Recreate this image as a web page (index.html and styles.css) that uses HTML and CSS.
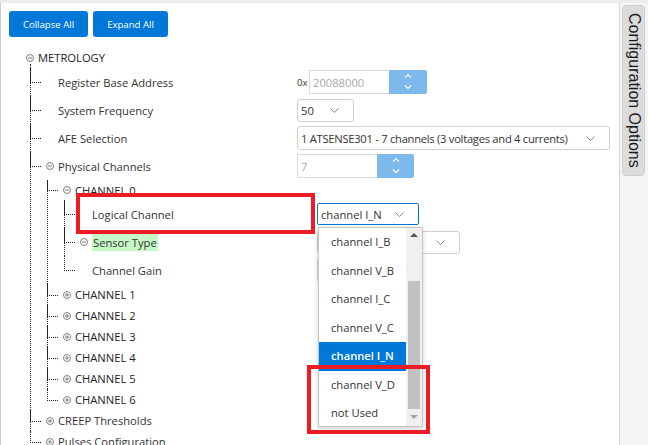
FILE: index.html
```html
<!DOCTYPE html>
<html lang="en">
<head>
<meta charset="utf-8">
<title>Configuration</title>
<link rel="stylesheet" href="styles.css">
</head>
<body>
<div class="app">
  <div class="main">
    <div class="toolbar">
      <button class="btn btn-collapse">Collapse All</button>
      <button class="btn btn-expand">Expand All</button>
    </div>
    <ul class="tree root">
      <li>
        <div class="row h21"><span class="tg"><svg class="ico" viewBox="0 0 8 8"><circle cx="4" cy="4" r="3.5"/><path d="M2 4h4"/></svg></span><span class="lbl caps">METROLOGY</span></div>
        <ul class="tree l1">
          <li><div class="row h28"><span class="tg"></span><span class="lbl w1">Register Base Address</span><span class="ctl"><span class="hex">0x</span><span class="num">20088000</span><span class="spinbtn b-addr"><svg class="spin" viewBox="0 0 8 16"><path d="M1 3.7L4 .7l3 3M1 11.5l3 3 3-3"/></svg></span></span></div></li>
          <li><div class="row h28"><span class="tg"></span><span class="lbl w1">System Frequency</span><span class="sel s-freq">50<svg class="chev" viewBox="0 0 9 5"><path d="M.5.5l4 4 4-4"/></svg></span></div></li>
          <li><div class="row h28"><span class="tg"></span><span class="lbl w1">AFE Selection</span><span class="sel s-afe"><span class="afe-text">1 ATSENSE301 - 7 channels (3 voltages and 4 currents)</span><svg class="chev" viewBox="0 0 9 5"><path d="M.5.5l4 4 4-4"/></svg></span></div></li>
          <li>
            <div class="row h28"><span class="tg"><svg class="ico" viewBox="0 0 8 8"><circle cx="4" cy="4" r="3.5"/><path d="M2 4h4"/></svg></span><span class="lbl w1">Physical Channels</span><span class="ctl"><span class="num">7</span><span class="spinbtn b-phys"><svg class="spin" viewBox="0 0 8 16"><path d="M1 3.7L4 .7l3 3M1 11.5l3 3 3-3"/></svg></span></span></div>
            <ul class="tree l2">
              <li>
                <div class="row h20"><span class="tg"><svg class="ico" viewBox="0 0 8 8"><circle cx="4" cy="4" r="3.5"/><path d="M2 4h4"/></svg></span><span class="lbl caps">CHANNEL 0</span></div>
                <ul class="tree l3">
                  <li>
                    <div class="row h28"><span class="tg"></span><span class="lbl w3">Logical Channel</span>
                      <span class="ctl">
                        <span class="sel s-log">channel I_N<svg class="chev" viewBox="0 0 9 5"><path d="M.5.5l4 4 4-4"/></svg></span>
                        <div class="dropdown">
                          <ul class="opts">
                            <li>channel I_B</li>
                            <li>channel V_B</li>
                            <li>channel I_C</li>
                            <li>channel V_C</li>
                            <li class="on">channel I_N</li>
                            <li>channel V_D</li>
                            <li>not Used</li>
                          </ul>
                          <div class="sbar"><span class="arr up"></span><span class="thumb"></span><span class="arr down"></span></div>
                          <span class="mark mark2"></span>
                        </div>
                      </span>
                      <span class="mark mark1"></span>
                    </div>
                  </li>
                  <li><div class="row h28"><span class="tg"><svg class="ico" viewBox="0 0 8 8"><circle cx="4" cy="4" r="3.5"/><path d="M2 4h4"/></svg></span><span class="lbl w3"><span class="hl">Sensor Type</span></span><span class="sel s-sensor"><span></span><svg class="chev" viewBox="0 0 9 5"><path d="M.5.5l4 4 4-4"/></svg></span></div></li>
                  <li><div class="row h28"><span class="tg"></span><span class="lbl w3">Channel Gain</span><span class="num n-gain"></span></div></li>
                </ul>
              </li>
              <li><div class="row h21"><span class="tg"><svg class="ico" viewBox="0 0 8 8"><circle cx="4" cy="4" r="3.5"/><path d="M2 4h4M4 2v4"/></svg></span><span class="lbl caps">CHANNEL 1</span></div></li>
              <li><div class="row h21"><span class="tg"><svg class="ico" viewBox="0 0 8 8"><circle cx="4" cy="4" r="3.5"/><path d="M2 4h4M4 2v4"/></svg></span><span class="lbl caps">CHANNEL 2</span></div></li>
              <li><div class="row h21"><span class="tg"><svg class="ico" viewBox="0 0 8 8"><circle cx="4" cy="4" r="3.5"/><path d="M2 4h4M4 2v4"/></svg></span><span class="lbl caps">CHANNEL 3</span></div></li>
              <li><div class="row h21"><span class="tg"><svg class="ico" viewBox="0 0 8 8"><circle cx="4" cy="4" r="3.5"/><path d="M2 4h4M4 2v4"/></svg></span><span class="lbl caps">CHANNEL 4</span></div></li>
              <li><div class="row h21"><span class="tg"><svg class="ico" viewBox="0 0 8 8"><circle cx="4" cy="4" r="3.5"/><path d="M2 4h4M4 2v4"/></svg></span><span class="lbl caps">CHANNEL 5</span></div></li>
              <li><div class="row h21"><span class="tg"><svg class="ico" viewBox="0 0 8 8"><circle cx="4" cy="4" r="3.5"/><path d="M2 4h4M4 2v4"/></svg></span><span class="lbl caps">CHANNEL 6</span></div></li>
            </ul>
          </li>
          <li><div class="row h21"><span class="tg"><svg class="ico" viewBox="0 0 8 8"><circle cx="4" cy="4" r="3.5"/><path d="M2 4h4M4 2v4"/></svg></span><span class="lbl">CREEP Thresholds</span></div></li>
          <li><div class="row h21"><span class="tg"><svg class="ico" viewBox="0 0 8 8"><circle cx="4" cy="4" r="3.5"/><path d="M2 4h4M4 2v4"/></svg></span><span class="lbl">Pulses Configuration</span></div></li>
        </ul>
      </li>
    </ul>
  </div>
  <div class="side"><div class="tab">Configuration Options</div></div>
</div>
</body>
</html>
```

FILE: styles.css
```css
* { box-sizing: border-box; }
html, body { margin: 0; padding: 0; }
body {
  width: 648px;
  height: 445px;
  overflow: hidden;
  background: #fff;
  font-family: "Open Sans", "Noto Sans", sans-serif;
  font-size: 11.2px;
  color: #333;
}
.app {
  display: flex;
  height: 445px;
  border-top: 3px solid #ededeb;
}
.main {
  flex: none;
  width: 620px;
  height: 100%;
  border-left: 1px solid #cdcdcd;
  border-right: 1px solid #d4d4d4;
  overflow: hidden;
}
.side {
  flex: 1;
  background: #f5f5f5;
  padding: 2px 0 0 2px;
}
.tab {
  width: 23px;
  height: 171px;
  background: #dcdcdc;
  border: 1px solid #cfcfcf;
  border-radius: 4px;
  writing-mode: vertical-rl;
  display: flex;
  align-items: center;
  justify-content: center;
  font-family: "Liberation Sans", Arial, sans-serif;
  font-size: 16px;
  color: #1a1a1a;
  white-space: nowrap;
}
.toolbar {
  display: flex;
  gap: 5px;
  padding: 8px 0 0 8px;
}
.btn {
  height: 26px;
  border: 0;
  border-radius: 3px;
  background: #0078d7;
  color: #fff;
  font-family: inherit;
  font-size: 9.6px;
  padding: 0;
}
.btn-collapse { width: 79px; }
.btn-expand { width: 75px; }

ul.tree { list-style: none; margin: 0; padding: 0; }
ul.tree.root { margin: 10px 0 0 20px; }
ul.tree.l1 { margin-left: 9px; position: relative; }
ul.tree.l1::before {
  content: "";
  position: absolute;
  left: 0;
  top: -4px;
  height: 4px;
  border-left: 1px dotted #222;
}
ul.tree.l2, ul.tree.l3 { margin-left: 6px; }
.tree .tree > li { position: relative; padding-left: 11px; }
.tree .tree > li:not(:last-child)::after {
  content: "";
  position: absolute;
  left: 0;
  top: 0;
  bottom: 0;
  border-left: 1px dotted #222;
}
.row {
  display: flex;
  align-items: center;
  position: relative;
  white-space: nowrap;
}
.tree .tree > li > .row::before {
  content: "";
  position: absolute;
  left: -11px;
  top: 0;
  width: 10px;
  height: 50%;
  border-left: 1px dotted #222;
  border-bottom: 1px dotted #222;
}
.h20 { height: 20px; }
.h21 { height: 21px; }
.h28 { height: 28px; }
.tg {
  flex: none;
  width: 17px;
  height: 100%;
  display: flex;
  align-items: center;
  padding-left: 5px;
}
.ico { width: 8px; height: 8px; display: block; }
.ico circle { fill: none; stroke: #707070; stroke-width: 0.9; }
.ico path { fill: none; stroke: #707070; stroke-width: 0.9; }
.lbl { flex: none; }
.w1 { width: 239px; }
.w3 { width: 225px; }
.caps { color: #222; }
.hl { background: #c6f8c6; padding: 1px 1px; }

.ctl { display: flex; align-items: center; position: relative; }
.hex { width: 12px; font-size: 9.5px; color: #333; }
.num {
  width: 80px;
  height: 24px;
  border: 1px solid #dadada;
  border-right: 0;
  display: flex;
  align-items: center;
  padding-left: 3px;
  color: #a8a8a8;
  background: #fff;
}
.spinbtn {
  height: 24px;
  background: #7db9ea;
  border-radius: 0 2px 2px 0;
  display: flex;
  align-items: center;
  justify-content: center;
}
.b-addr { width: 38px; }
.b-phys { width: 37px; }
.spin { width: 8px; height: 16px; display: block; }
.spin path { fill: none; stroke: #fff; stroke-width: 1.1; }
.sel {
  height: 23px;
  display: flex;
  align-items: center;
  justify-content: space-between;
  padding: 0 14px 0 3px;
  border: 1px solid #cfcfcf;
  border-radius: 3px;
  background: #fff;
  color: #333;
}
.chev { width: 9px; height: 5px; display: block; flex: none; }
.chev path { fill: none; stroke: #8a8a8a; stroke-width: 1; }
.s-freq { width: 57px; }
.s-afe { width: 313px; height: 24px; }
.afe-text { letter-spacing: -0.27px; }
.s-sensor { width: 143px; }
.s-log {
  width: 102px;
  height: 22px;
  border-color: #0078d7;
  border-radius: 2px;
}
.n-gain { width: 90px; border: 1px solid #d4d4d4; border-radius: 2px; }

.dropdown {
  position: absolute;
  left: 1px;
  top: calc(100% + 2px);
  width: 105px;
  height: 200px;
  display: flex;
  background: #fff;
  border: 1px solid #c6c6c6;
  box-shadow: 0 2px 5px rgba(0, 0, 0, 0.18);
  z-index: 5;
}
.opts {
  list-style: none;
  margin: 0;
  padding: 0;
  flex: 1;
  overflow: hidden;
}
.opts li {
  height: 28.5px;
  line-height: 28.5px;
  padding-left: 12px;
  color: #333;
}
.opts li.on { background: #0078d7; color: #fff; font-weight: 600; }
.sbar {
  width: 16px;
  flex: none;
  background: #f0f0f0;
  display: flex;
  flex-direction: column;
  align-items: center;
}
.arr {
  width: 0;
  height: 0;
  border-left: 4px solid transparent;
  border-right: 4px solid transparent;
}
.arr.up { border-bottom: 4px solid #555; margin-top: 5px; }
.thumb { width: 12px; height: 128px; background: #c1c1c1; margin-top: 44px; }
.arr.down { border-top: 4px solid #a3a3a3; margin-top: auto; margin-bottom: 7px; }

.mark {
  position: absolute;
  border: 4px solid #ec1c24;
  pointer-events: none;
}
.mark1 { left: 1px; top: -7px; width: 239px; height: 41px; z-index: 6; }
.mark2 { left: -12px; top: 137px; width: 123px; height: 69px; z-index: 6; }
```
